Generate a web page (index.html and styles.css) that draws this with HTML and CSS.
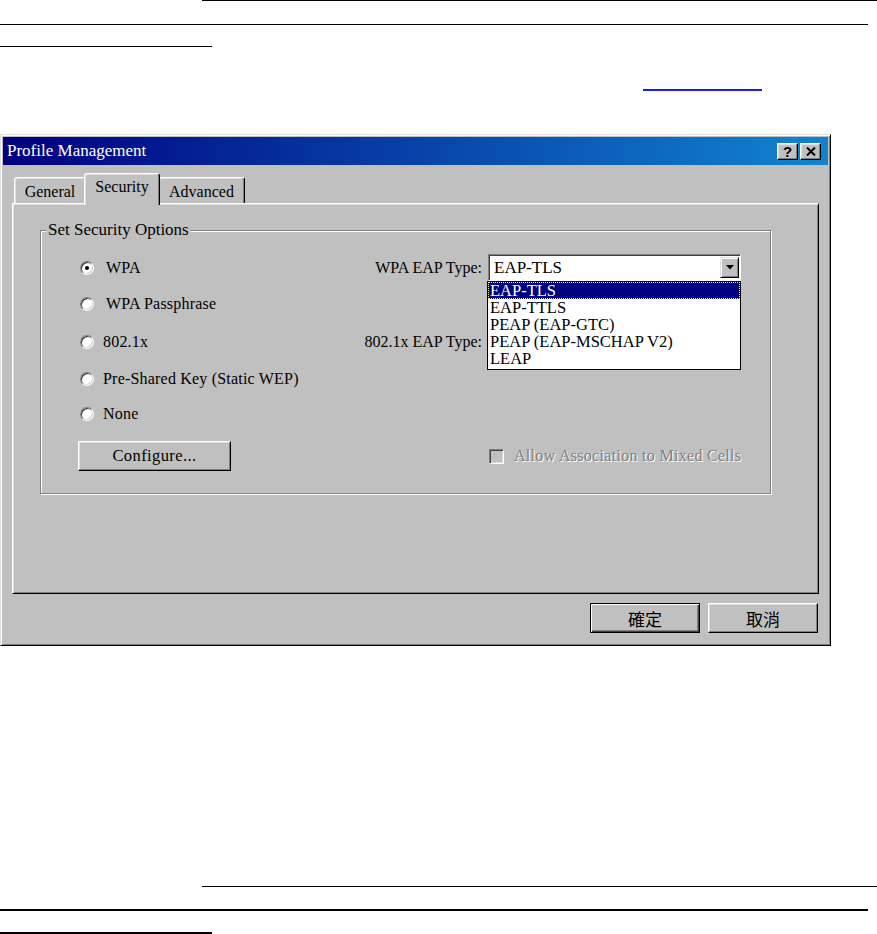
FILE: index.html
```html
<!DOCTYPE html>
<html>
<head>
<meta charset="utf-8">
<title>Profile Management</title>
<link rel="stylesheet" href="styles.css">
</head>
<body>
<div class="page">
  <div class="rule r-top1"></div>
  <div class="rule r-top2"></div>
  <div class="rule r-top3"></div>
  <span class="xref"></span>

  <div class="dialog">
    <div class="titlebar">
      <span class="title">Profile Management</span>
      <div class="caps">
        <span class="cap">?</span>
        <span class="cap"><svg width="10" height="9" viewBox="0 0 10 9"><path d="M1 0.5 L9 8.5 M9 0.5 L1 8.5" stroke="#000" stroke-width="2" fill="none"/></svg></span>
      </div>
    </div>
    <div class="content">
      <div class="tabs">
        <div class="tab general">General</div>
        <div class="tab active">Security</div>
        <div class="tab advanced">Advanced</div>
      </div>
      <div class="panel">
        <div class="group">
          <span class="legend">Set Security Options</span>
          <div class="opts">
            <div class="ropt"><span class="radio on"></span><span class="rtext wide">WPA</span></div>
            <div class="lbl">WPA EAP Type:</div>
            <div class="ctl">
              <div class="select">
                <span class="val">EAP-TLS</span>
                <span class="drop"><svg width="8" height="5" viewBox="0 0 8 5"><path d="M0 0 H8 L4 4.5 Z" fill="#000"/></svg></span>
                <div class="list">
                  <div class="opt sel">EAP-TLS</div>
                  <div class="opt">EAP-TTLS</div>
                  <div class="opt">PEAP (EAP-GTC)</div>
                  <div class="opt">PEAP (EAP-MSCHAP V2)</div>
                  <div class="opt">LEAP</div>
                </div>
              </div>
            </div>
            <div class="ropt"><span class="radio"></span><span class="rtext wide">WPA Passphrase</span></div>
            <div class="ropt"><span class="radio"></span><span class="rtext">802.1x</span></div>
            <div class="lbl">802.1x EAP Type:</div>
            <div class="ropt"><span class="radio"></span><span class="rtext">Pre-Shared Key (Static WEP)</span></div>
            <div class="ropt"><span class="radio"></span><span class="rtext">None</span></div>
            <div class="last"><button class="wbtn configure">Configure...</button></div>
            <div class="ctl last">
              <div class="check"><span class="box"></span><span class="dis">Allow Association to Mixed Cells</span></div>
            </div>
          </div>
        </div>
      </div>
      <div class="actions">
        <button class="wbtn cjk default">確定</button>
        <button class="wbtn cjk">取消</button>
      </div>
    </div>
  </div>

  <div class="rule r-bot1"></div>
  <div class="rule r-bot2"></div>
  <div class="rule r-bot3"></div>
</div>
</body>
</html>
```

FILE: styles.css
```css
* { box-sizing: border-box; }

body {
  margin: 0;
  background: #fff;
  font-family: "Liberation Serif", "Times New Roman", serif;
  font-size: 16px;
  color: #000;
}

.page {
  width: 877px;
  height: 934px;
  overflow: hidden;
}

.rule { background: #000; height: 1px; }
.r-top1 { margin-left: 202px; width: 675px; }
.r-top2 { margin-top: 23px; width: 868px; }
.r-top3 { margin-top: 21px; width: 212px; }

.xref {
  display: block;
  margin: 42px 0 0 643px;
  width: 119px;
  height: 2px;
  background: #1a1aff;
}

.dialog {
  margin-top: 43px;
  width: 831px;
  height: 512px;
  background: #c0c0c0;
  border: 1px solid;
  border-color: #dfdfdf #000 #000 #dfdfdf;
  box-shadow: inset 1px 1px #fff, inset -1px -1px #808080;
  padding: 2px;
  display: flex;
  flex-direction: column;
}

.titlebar {
  height: 28px;
  flex: none;
  background: linear-gradient(to right, #000080, #1084d0);
  display: flex;
  align-items: center;
  justify-content: space-between;
  padding: 0 7px 0 4px;
}
.title { color: #fff; font-size: 17px; }

.caps { display: flex; gap: 2px; }
.cap {
  width: 21px;
  height: 17px;
  background: #c0c0c0;
  border: 1px solid;
  border-color: #fff #000 #000 #fff;
  box-shadow: inset -1px -1px #808080, inset 1px 1px #dfdfdf;
  display: flex;
  align-items: center;
  justify-content: center;
  font: bold 15px "Liberation Sans", Arial, sans-serif;
  line-height: 1;
}

.content {
  flex: 1;
  padding: 8px 9px 10px 9px;
  display: flex;
  flex-direction: column;
}

.tabs {
  height: 30px;
  flex: none;
  display: flex;
  align-items: flex-end;
  padding-left: 2px;
}
.tab {
  height: 26px;
  background: #c0c0c0;
  border: 1px solid;
  border-bottom: none;
  border-color: #fff #000 transparent #fff;
  box-shadow: inset -1px 0 #808080, inset 1px 1px #dfdfdf;
  border-radius: 3px 3px 0 0;
  display: flex;
  align-items: center;
  justify-content: center;
  padding-top: 3px;
}
.tab.general { width: 72px; }
.tab.active {
  width: 76px;
  height: 32px;
  margin: 0 -2px -2px;
  position: relative;
  z-index: 1;
  padding: 0 0 6px;
}
.tab.advanced { width: 87px; }

.panel {
  height: 391px;
  flex: none;
  border: 1px solid;
  border-color: #fff #000 #000 #fff;
  box-shadow: inset 1px 1px #dfdfdf, inset -1px -1px #808080;
  padding: 26px 0 0 27px;
}

.group {
  position: relative;
  width: 731px;
  height: 264px;
  border: 1px solid #808080;
  box-shadow: 1px 1px 0 #fff, inset 1px 1px 0 #fff;
  padding: 19px 29px 0 39px;
}
.legend {
  position: absolute;
  top: -10px;
  left: 5px;
  padding: 0 2px;
  background: #c0c0c0;
  font-size: 17px;
  line-height: 18px;
}

.opts {
  display: grid;
  grid-template-columns: 254px 142px 253px;
  grid-template-rows: 35px 37px 39px 35px 35px 40px;
  column-gap: 6px;
  align-items: center;
}

.ropt {
  grid-column: 1;
  display: flex;
  align-items: center;
  letter-spacing: 0.2px;
}
.radio {
  flex: none;
  position: relative;
  width: 14px;
  height: 14px;
  border-radius: 50%;
  background: #fff;
  border: 1px solid;
  border-color: #808080 #f4f4f4 #f4f4f4 #808080;
  box-shadow: inset 1px 1px #303030, inset -1px -1px #d4d4d4;
  margin-right: 9px;
}
.radio.on::after {
  content: "";
  position: absolute;
  left: 4px;
  top: 4px;
  width: 4px;
  height: 4px;
  border-radius: 50%;
  background: #000;
}
.rtext.wide { margin-left: 3px; }

.lbl {
  grid-column: 2;
  justify-self: end;
  white-space: nowrap;
}
.ctl { grid-column: 3; }

.select {
  position: relative;
  height: 27px;
  background: #fff;
  border: 1px solid;
  border-color: #808080 #fff #fff #808080;
  box-shadow: inset 1px 1px #404040;
  display: flex;
  align-items: center;
  padding: 0 1px 0 5px;
}
.val { flex: 1; font-size: 17px; }
.drop {
  width: 19px;
  height: 21px;
  background: #c0c0c0;
  border: 1px solid;
  border-color: #dfdfdf #000 #000 #dfdfdf;
  box-shadow: inset 1px 1px #fff, inset -1px -1px #808080;
  display: flex;
  align-items: center;
  justify-content: center;
}

.list {
  position: absolute;
  left: -2px;
  top: calc(100% + 1px);
  width: 254px;
  background: #fff;
  border: 1px solid #000;
  padding: 0 0 2px;
  z-index: 2;
}
.opt {
  height: 17px;
  line-height: 17px;
  padding-left: 2px;
  white-space: nowrap;
  font-size: 16.5px;
  overflow: hidden;
}
.opt.sel {
  background: #000080;
  color: #fff;
  outline: 1px dotted #ffff80;
  outline-offset: -1px;
}

.last { grid-row: 6; align-self: end; height: 30px; display: flex; align-items: center; }
.last.ctl { grid-column: 3; }

.wbtn {
  font-family: "Liberation Serif", "Times New Roman", serif;
  font-size: 16px;
  color: #000;
  background: #c0c0c0;
  border: 1px solid;
  border-color: #fff #000 #000 #fff;
  box-shadow: inset -1px -1px #808080, inset 1px 1px #dfdfdf;
  padding: 0;
  height: 30px;
}
.configure { width: 153px; margin-left: -2px; letter-spacing: 0.4px; font-size: 16.5px; }

.check { display: flex; align-items: center; padding-left: 1px; }
.box {
  width: 15px;
  height: 15px;
  background: #c0c0c0;
  border: 1px solid;
  border-color: #808080 #fff #fff #808080;
  box-shadow: inset 1px 1px #404040, inset -1px -1px #dfdfdf;
  margin-right: 10px;
}
.dis {
  color: #808080;
  text-shadow: 1px 1px 0 #fff;
  white-space: nowrap;
  letter-spacing: 0.3px;
}

.actions {
  margin-top: 9px;
  display: flex;
  justify-content: flex-end;
  gap: 8px;
  padding-right: 1px;
}
.wbtn.cjk {
  width: 110px;
  font-family: "Noto Sans CJK TC", "Noto Sans CJK SC", sans-serif;
  font-size: 17px;
}
.wbtn.default {
  border: 1px solid #000;
  box-shadow: inset 1px 1px #fff, inset -1px -1px #404040, inset -2px -2px #808080;
}

.r-bot1 { margin-top: 240px; margin-left: 202px; width: 675px; }
.r-bot2 { margin-top: 22px; width: 868px; height: 2px; }
.r-bot3 { margin-top: 21px; width: 212px; height: 2px; }
```
